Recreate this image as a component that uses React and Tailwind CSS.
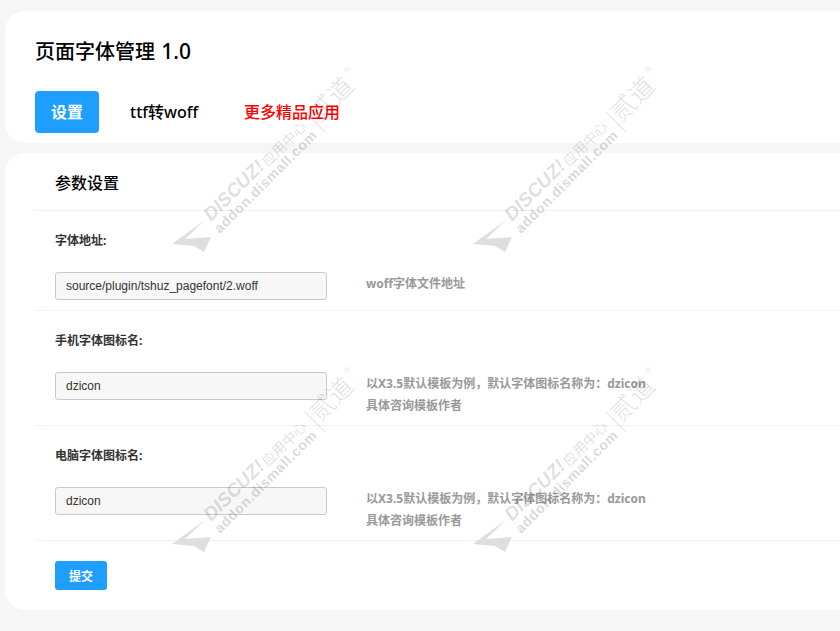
import React from "react";

const cjk = "font-['Noto_Sans','Noto_Sans_CJK_SC',sans-serif]";

const Watermark = ({ className }) => (
  <svg
    viewBox="-5 -185 200 200"
    width="200"
    height="200"
    aria-hidden="true"
    className={`pointer-events-none absolute ${className}`}
  >
    <path d="M0 0L33-24L13-5L39-7L32 8L22 2Z" fill="#dedede" />
    <g fill="#000" fillOpacity="0.14">
      <g transform="translate(39 -22) rotate(-45)">
        <text fontFamily="Liberation Sans" fontWeight="700" fontStyle="italic" fontSize="19">DISCUZ!</text>
        <text x="79" y="1.5" fontFamily="Noto Sans CJK SC" fontWeight="400" fontSize="14">应用中心</text>
      </g>
      <text
        transform="translate(48 -10) rotate(-45)"
        fontFamily="Liberation Sans"
        fontWeight="700"
        fontSize="14"
        letterSpacing="0.7"
        fillOpacity="0.17"
      >
        addon.dismall.com
      </text>
      <text
        transform="translate(148 -121) rotate(-45)"
        fontFamily="Noto Sans CJK SC"
        fontWeight="300"
        fontSize="25"
      >
        贰道
      </text>
      <text transform="translate(175 -170) rotate(-45)" fontFamily="Liberation Sans" fontSize="9">®</text>
    </g>
    <path d="M133-132L153-112" stroke="#000" strokeOpacity="0.14" fill="none" />
  </svg>
);

const Field = ({ label, value, hints }) => (
  <div className="border-b border-[#eef3f5]">
    <div className="flex h-[61px] items-center pb-[2px] pl-5 text-xs font-bold text-[#333]">
      {label}
    </div>
    <div className="flex min-h-[38px] pb-2 pl-5">
      <div className="flex h-7 w-[272px] items-center rounded-[3px] border border-[#c9c9c9] bg-[#f7f7f7] px-[10px] font-['Liberation_Sans',sans-serif] text-xs text-[#333]">
        {value}
      </div>
      <div className="ml-[39px] pt-px text-xs font-bold leading-[22px] text-[#999]">
        {hints.map((line) => (
          <p key={line}>{line}</p>
        ))}
      </div>
    </div>
  </div>
);

export default function App() {
  return (
    <div className={`relative h-[631px] w-[840px] overflow-hidden bg-[#f6f6f6] pt-[11px] pl-[5px] ${cjk}`}>
      <section className="h-[132px] w-[900px] rounded-[20px] bg-white pl-[30px]">
        <h1 className="pt-[26px] text-xl leading-7 font-medium text-black">
          页面字体管理 <span className="ml-px text-[21px]">1.0</span>
        </h1>
        <nav className="mt-[25px] flex items-center text-base font-medium">
          <a className="flex h-[42px] w-16 items-center justify-center rounded bg-[#1e9fff] font-bold text-white">设置</a>
          <a className="ml-[31px] text-black">ttf转woff</a>
          <a className="ml-[46px] text-[#ff0000]">更多精品应用</a>
        </nav>
      </section>

      <section className="mt-[10px] h-[457px] w-[900px] rounded-[20px] bg-white pl-[30px]">
        <div className="flex h-[58px] items-center border-b border-[#eeeeee] pt-[2px] pl-5 text-base font-medium text-black">
          参数设置
        </div>
        <Field
          label="字体地址:"
          value="source/plugin/tshuz_pagefont/2.woff"
          hints={["woff字体文件地址"]}
        />
        <Field
          label="手机字体图标名:"
          value="dzicon"
          hints={["以X3.5默认模板为例，默认字体图标名称为：dzicon", "具体咨询模板作者"]}
        />
        <Field
          label="电脑字体图标名:"
          value="dzicon"
          hints={["以X3.5默认模板为例，默认字体图标名称为：dzicon", "具体咨询模板作者"]}
        />
        <button className="mt-5 ml-5 flex h-[29px] w-[52px] items-center justify-center rounded-[3px] bg-[#1e9fff] pt-[2px] text-xs font-bold text-white">
          提交
        </button>
      </section>

      <Watermark className="left-[167px] top-[59px]" />
      <Watermark className="left-[468px] top-[59px]" />
      <Watermark className="left-[167px] top-[359px]" />
      <Watermark className="left-[468px] top-[359px]" />
    </div>
  );
}
